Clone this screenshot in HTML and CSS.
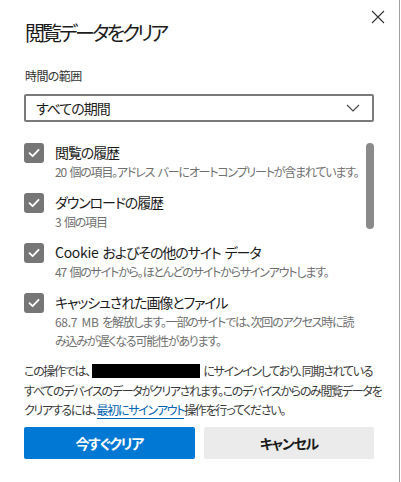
FILE: index.html
```html
<!DOCTYPE html>
<html lang="ja">
<head>
<meta charset="utf-8">
<link rel="stylesheet" href="styles.css">
</head>
<body>
<div class="dialog">
  <div class="header">
    <h1 class="title">閲覧データをクリア</h1>
    <button class="close" aria-label="閉じる">
      <svg width="14" height="14" viewBox="0 0 14 14"><path d="M1 1L13 13M13 1L1 13" stroke="#333" stroke-width="1.1" fill="none"/></svg>
    </button>
  </div>
  <div class="label">時間の範囲</div>
  <div class="select">
    <span>すべての期間</span>
    <svg width="14" height="8" viewBox="0 0 14 8"><path d="M1 1L7 7L13 1" stroke="#444" stroke-width="1.1" fill="none"/></svg>
  </div>
  <div class="list">
    <div class="items">
      <div class="item">
        <span class="check"><svg width="20" height="20" viewBox="0 0 20 20"><path d="M5.5 10.2L8.6 13.2L14.6 6.8" stroke="#fff" stroke-width="1.8" fill="none" stroke-linecap="round" stroke-linejoin="round"/></svg></span>
        <div class="text">
          <div class="item-title">閲覧の履歴</div>
          <div class="item-sub">20 個の項目。アドレス バーにオートコンプリートが含まれています。</div>
        </div>
      </div>
      <div class="item">
        <span class="check"><svg width="20" height="20" viewBox="0 0 20 20"><path d="M5.5 10.2L8.6 13.2L14.6 6.8" stroke="#fff" stroke-width="1.8" fill="none" stroke-linecap="round" stroke-linejoin="round"/></svg></span>
        <div class="text">
          <div class="item-title">ダウンロードの履歴</div>
          <div class="item-sub">3 個の項目</div>
        </div>
      </div>
      <div class="item">
        <span class="check"><svg width="20" height="20" viewBox="0 0 20 20"><path d="M5.5 10.2L8.6 13.2L14.6 6.8" stroke="#fff" stroke-width="1.8" fill="none" stroke-linecap="round" stroke-linejoin="round"/></svg></span>
        <div class="text">
          <div class="item-title"><span class="latin">Cookie</span> およびその他のサイト データ</div>
          <div class="item-sub">47 個のサイトから。ほとんどのサイトからサインアウトします。</div>
        </div>
      </div>
      <div class="item">
        <span class="check"><svg width="20" height="20" viewBox="0 0 20 20"><path d="M5.5 10.2L8.6 13.2L14.6 6.8" stroke="#fff" stroke-width="1.8" fill="none" stroke-linecap="round" stroke-linejoin="round"/></svg></span>
        <div class="text">
          <div class="item-title">キャッシュされた画像とファイル</div>
          <div class="item-sub"><span class="latin">68.7 MB</span> を解放します。一部のサイトでは、次回のアクセス時に読<br>み込みが遅くなる可能性があります。</div>
        </div>
      </div>
    </div>
    <div class="scrollbar"></div>
  </div>
  <p class="notice">この操作では、<span class="redact"></span> にサインインしており、同期されている<br>すべてのデバイスのデータがクリアされます。このデバイスからのみ閲覧データを<br>クリアするには、<a href="#" class="link">最初にサインアウト</a>操作を行ってください。</p>
  <div class="buttons">
    <button class="btn primary">今すぐクリア</button>
    <button class="btn secondary">キャンセル</button>
  </div>
</div>
</body>
</html>
```
FILE: styles.css
```css
html, body {
  margin: 0;
  padding: 0;
  background: #fff;
}
body {
  font-family: "Noto Sans CJK JP", "Noto Sans", sans-serif;
  font-feature-settings: "palt";
  color: #1b1b1b;
}
.dialog {
  width: 400px;
  height: 482px;
  box-sizing: border-box;
  padding: 0 25px 0 24px;
  border-right: 1px solid #a0a0a0;
}
.header {
  display: flex;
  justify-content: space-between;
  align-items: flex-start;
}
.title {
  margin: 20px 0 0 1px;
  font-size: 20px;
  line-height: 26px;
  font-weight: 400;
  letter-spacing: -2.9px;
}
.close {
  margin: 10px -11px 0 0;
  padding: 0;
  border: 0;
  background: none;
  width: 14px;
  height: 14px;
  display: flex;
}
.label {
  margin-top: 22px;
  font-size: 12px;
  line-height: 16px;
  color: #333;
  padding-left: 1px;
  letter-spacing: -0.6px;
}
.select {
  margin-top: 10px;
  height: 28px;
  box-sizing: border-box;
  border: 2px solid #7a7a7a;
  border-radius: 2px;
  display: flex;
  align-items: center;
  justify-content: space-between;
  padding: 0 12px 0 10px;
  font-size: 14px;
  letter-spacing: -1px;
  color: #1b1b1b;
}
.list {
  margin-top: 20px;
  display: flex;
}
.items {
  flex: 1;
  display: flex;
  flex-direction: column;
  gap: 11px;
}
.item {
  display: flex;
  gap: 11px;
}
.check {
  width: 20px;
  height: 20px;
  margin-top: 1px;
  border-radius: 3px;
  background: #767676;
  display: flex;
  flex: none;
}
.item-title {
  font-size: 14px;
  line-height: 20px;
  color: #1b1b1b;
  letter-spacing: -1.1px;
  word-spacing: 2px;
}
.item-sub {
  font-size: 12px;
  line-height: 19px;
  color: #707070;
  letter-spacing: -1.2px;
  word-spacing: 2px;
  white-space: nowrap;
}
.latin {
  letter-spacing: -0.3px;
}
.scrollbar {
  width: 8px;
  height: 86px;
  margin-top: 1px;
  border-radius: 4px;
  background: #8a8a8a;
  flex: none;
}
.notice {
  margin: 11px 0 0;
  font-size: 12px;
  line-height: 19.5px;
  color: #3a3a3a;
  white-space: nowrap;
  letter-spacing: -1.3px;
  word-spacing: 2px;
}
.redact {
  display: inline-block;
  width: 108px;
  height: 14px;
  background: #000;
  vertical-align: -2px;
  margin-left: 2px;
}
.link {
  color: #0063b1;
  text-decoration: none;
  border-bottom: 1px solid #0063b1;
}
.buttons {
  margin-top: 7px;
  display: flex;
  gap: 9px;
}
.btn {
  flex: 1;
  height: 32px;
  border: 0;
  border-radius: 2px;
  font-family: inherit;
  font-feature-settings: "palt";
  font-size: 14px;
  font-weight: 700;
  letter-spacing: -1.3px;
}
.primary {
  background: #0078d4;
  color: #fff;
}
.secondary {
  background: #ebebeb;
  color: #1b1b1b;
}
```
